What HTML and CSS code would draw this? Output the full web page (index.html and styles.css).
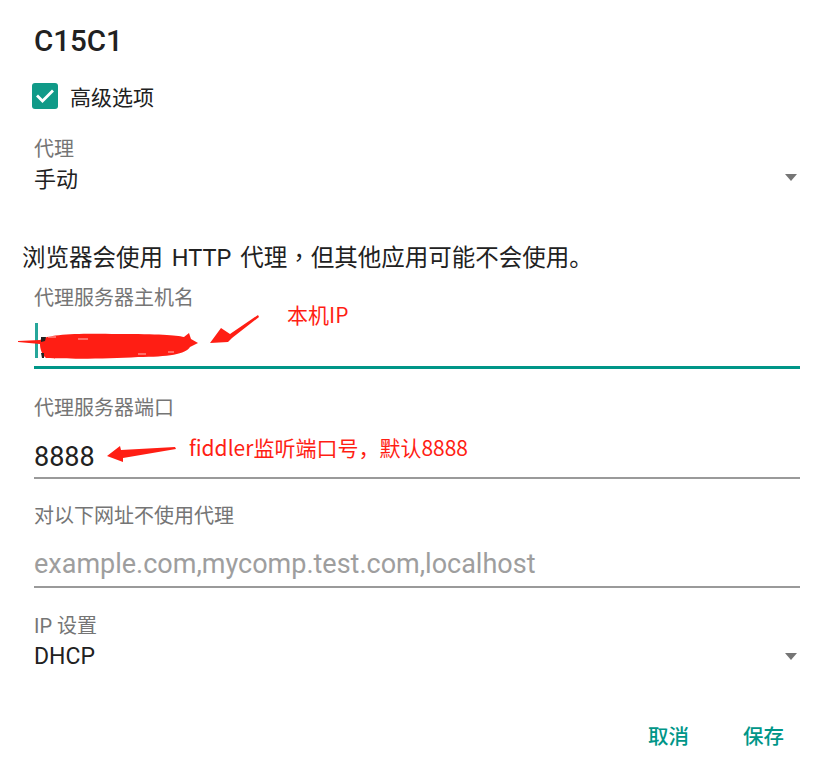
FILE: index.html
```html
<!DOCTYPE html>
<html lang="zh-CN">
<head>
<meta charset="utf-8">
<title>C15C1</title>
<link rel="stylesheet" href="styles.css">
</head>
<body>
<div class="dialog">
  <h1 class="title">C15C1</h1>

  <div class="check-row">
    <span class="checkbox">
      <svg viewBox="0 0 26 26" width="26" height="26"><polyline points="6,13.5 10.5,18 20,8.5" fill="none" stroke="#fff" stroke-width="2.8" stroke-linecap="square"/></svg>
    </span>
    <span class="check-label">高级选项</span>
  </div>

  <div class="label l-proxy">代理</div>
  <div class="select-row s-proxy">
    <span class="value">手动</span>
    <span class="arrow-down"></span>
  </div>

  <p class="info">浏览器会使用 HTTP 代理<span class="punct" lang="zh-Hant-TW">，</span>但其他应用可能不会使用。</p>

  <div class="label l-host">代理服务器主机名</div>
  <div class="input focused host">
    <span class="cursor"></span>
  </div>

  <div class="label l-port">代理服务器端口</div>
  <div class="input port"><span class="input-text">8888</span></div>

  <div class="label l-bypass">对以下网址不使用代理</div>
  <div class="input bypass"><span class="placeholder">example.com,mycomp.test.com,localhost</span></div>

  <div class="label l-ip">IP 设置</div>
  <div class="select-row s-ip">
    <span class="value latin">DHCP</span>
    <span class="arrow-down"></span>
  </div>

  <div class="actions">
    <span class="btn">取消</span>
    <span class="btn">保存</span>
  </div>

  <!-- annotations drawn over the screenshot -->
  <svg class="scribble" viewBox="0 0 182 30" width="182" height="30">
    <path d="M0,10 L22,9 C30,3 60,2 100,3 C140,3 158,4 166,6 L171,2 L173,8 L180,12 L172,16 C168,23 150,26 120,26 C90,28 50,28 28,27 C24,24 22,18 22,13 L0,11 Z" fill="#ff1e14"/>
    <path d="M30,6 L38,6 M60,8 L70,8 M120,23 L128,23 M150,21 L156,21" stroke="#ffffff" stroke-width="1" opacity="0.7"/>
    <path d="M23,6 L28,6 L27,10 L23,11 Z M23,22 L26,22 L26,27 L24,27 Z" fill="#222"/>
  </svg>

  <svg class="arrow a-host" viewBox="0 0 50 30" width="50" height="30">
    <polygon points="48,1 20,20 11,14 0,29 18,28 22,24 49,3" fill="#ff1e14"/>
  </svg>
  <div class="note n-host">本机IP</div>

  <svg class="arrow a-port" viewBox="0 0 70 20" width="70" height="20">
    <polygon points="68,2 14,5 13,1 0,11 16,17 16,13 69,4" fill="#ff1e14"/>
  </svg>
  <div class="note n-port">fiddler监听端口号，默认8888</div>
</div>
</body>
</html>
```

FILE: styles.css
```css
* { box-sizing: border-box; }

html, body {
  margin: 0;
  padding: 0;
  background: #ffffff;
}

body {
  font-family: Roboto, "Noto Sans CJK SC", sans-serif;
  color: #212121;
}

.dialog {
  position: relative;
  width: 824px;
  height: 761px;
  padding: 24px 24px 0 34px;
}

.title {
  margin: 0;
  height: 34px;
  line-height: 34px;
  font-size: 29.5px;
  font-weight: 500;
  color: #212121;
}

.check-row {
  display: flex;
  align-items: center;
  height: 40px;
  margin-top: 18px;
  margin-left: -2px;
}

.checkbox {
  width: 26px;
  height: 26px;
  border-radius: 3px;
  background: #109a88;
  display: flex;
}

.check-label {
  margin-left: 12px;
  font-size: 21px;
  color: #212121;
}

.label {
  height: 26px;
  line-height: 26px;
  font-size: 20px;
  color: #757575;
}

.l-proxy { margin-top: 20px; }

.select-row {
  display: flex;
  align-items: center;
  justify-content: space-between;
  height: 30px;
  padding-right: 3px;
}

.s-proxy { margin-top: 0; }

.value {
  font-size: 22px;
  color: #212121;
}

.value.latin { font-size: 23px; }

.arrow-down {
  width: 0;
  height: 0;
  border-left: 6px solid transparent;
  border-right: 6px solid transparent;
  border-top: 7px solid #757575;
}

.info {
  margin: 48px 0 0 -12px;
  height: 32px;
  line-height: 32px;
  font-size: 23.5px;
  word-spacing: 3px;
  color: #212121;
}

.punct {
  font-family: "Noto Sans CJK TC", sans-serif;
}

.l-host { margin-top: 13px; }

.input {
  display: flex;
  align-items: center;
  border-bottom: 2px solid #9a9a9a;
}

.input.focused { border-bottom: 3px solid #009688; }

.host { height: 58px; padding-top: 3px; }

.cursor {
  width: 2.5px;
  height: 35px;
  margin-left: 1px;
  background: #26a69a;
}

.l-port { margin-top: 26px; }

.port { height: 58px; }

.input-text {
  font-size: 27px;
  color: #212121;
  padding-top: 15px;
}

.l-bypass { margin-top: 24px; }

.bypass { height: 59px; }

.placeholder {
  font-size: 27px;
  color: #9e9e9e;
  padding-top: 12px;
}

.l-ip { margin-top: 25px; }

.s-ip { margin-top: 2px; }

.actions {
  display: flex;
  justify-content: flex-end;
  gap: 54px;
  margin-top: 53px;
  padding-right: 16px;
}

.btn {
  font-size: 20.5px;
  font-weight: 500;
  color: #009688;
  line-height: 26px;
}

/* annotations overlaid on the screenshot */
.scribble {
  position: absolute;
  left: 18px;
  top: 331px;
}

.arrow { position: absolute; }

.a-host { left: 210px; top: 314px; }

.a-port { left: 107px; top: 445px; }

.note {
  position: absolute;
  font-family: "Noto Sans CJK SC", sans-serif;
  font-size: 21px;
  line-height: 24px;
  color: #ff1e14;
  white-space: nowrap;
}

.n-host { left: 287px; top: 302px; }

.n-port { left: 189px; top: 435px; }
```
